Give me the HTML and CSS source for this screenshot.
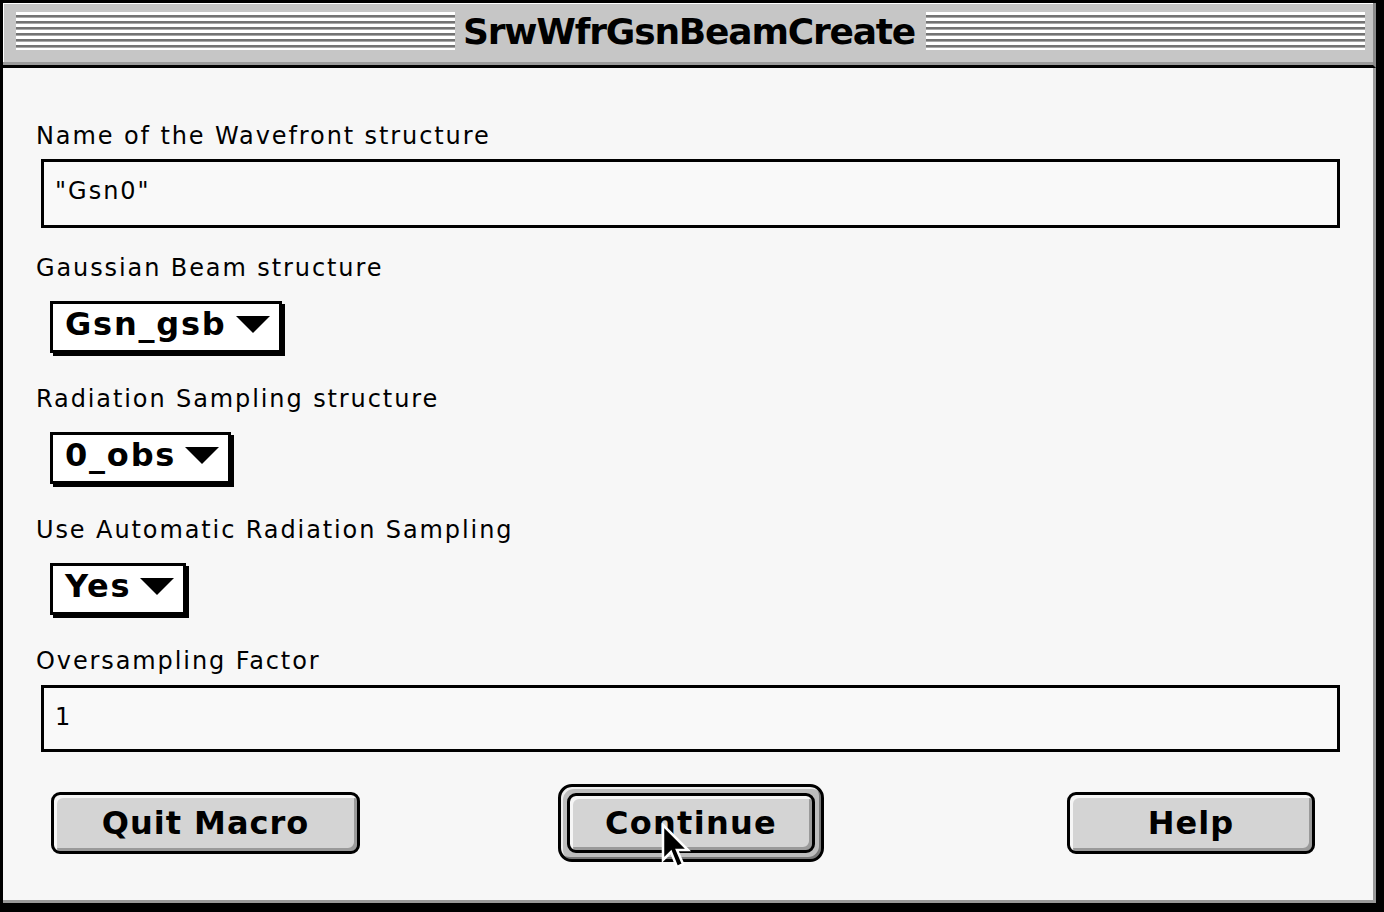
FILE: index.html
```html
<!DOCTYPE html>
<html>
<head>
<meta charset="utf-8">
<title>SrwWfrGsnBeamCreate</title>
<link rel="stylesheet" href="styles.css">
</head>
<body>
<div class="window">
  <div class="titlebar">
    <div class="stripes"></div>
    <div class="title">SrwWfrGsnBeamCreate</div>
    <div class="stripes"></div>
  </div>
  <div class="content">
    <div class="label">Name of the Wavefront structure</div>
    <div class="field field-first">"Gsn0"</div>
    <div class="label">Gaussian Beam structure</div>
    <div class="popup"><span class="popup-text">Gsn_gsb</span><svg class="tri" width="34" height="17" viewBox="0 0 34 17"><polygon points="0,0 34,0 17,17" fill="#000"/></svg></div>
    <div class="label">Radiation Sampling structure</div>
    <div class="popup"><span class="popup-text">0_obs</span><svg class="tri" width="34" height="17" viewBox="0 0 34 17"><polygon points="0,0 34,0 17,17" fill="#000"/></svg></div>
    <div class="label">Use Automatic Radiation Sampling</div>
    <div class="popup"><span class="popup-text">Yes</span><svg class="tri" width="34" height="17" viewBox="0 0 34 17"><polygon points="0,0 34,0 17,17" fill="#000"/></svg></div>
    <div class="label">Oversampling Factor</div>
    <div class="field field-last">1</div>
    <div class="buttons">
      <div class="btn btn-quit">Quit Macro</div>
      <div class="default-ring"><div class="btn btn-continue">Continue</div></div>
      <div class="btn btn-help">Help</div>
    </div>
    <svg class="cursor" width="30" height="48" viewBox="0 0 30 48"><path d="M2 2 L2 37 L10 29 L16 44 L22 41 L16 27 L27 27 Z" fill="#000" stroke="#fff" stroke-width="2.5" stroke-linejoin="miter"/></svg>
  </div>
</div>
</body>
</html>
```
FILE: styles.css
```css
html, body {
  margin: 0;
  padding: 0;
  background: #000;
}

.window {
  box-sizing: border-box;
  width: 1384px;
  height: 912px;
  border-top: 3px solid #000;
  border-left: 3px solid #000;
  border-right: 8px solid #000;
  border-bottom: 9px solid #000;
  display: flex;
  flex-direction: column;
  background: #f7f7f7;
  position: relative;
}

.titlebar {
  box-sizing: border-box;
  height: 65px;
  flex: none;
  background: #c6c6c6;
  border-bottom: 3px solid #000;
  border-right: 3px solid #8a8a8a;
  box-shadow: inset 0 -3px 0 #9a9a9a, inset 1px 1px 0 #fff;
  display: flex;
  align-items: flex-start;
  padding: 9px 8px 0 13px;
}

.stripes {
  flex: 1;
  height: 38px;
  background: repeating-linear-gradient(to bottom, #ffffff 0, #ffffff 3px, #737373 3px, #737373 5px, #a8a8a8 5px, #a8a8a8 6px);
}

.title {
  font-family: "DejaVu Sans", "Liberation Sans", sans-serif;
  font-weight: bold;
  font-size: 36px;
  letter-spacing: -1.2px;
  line-height: 40px;
  color: #000;
  padding: 0 11px 0 8px;
  white-space: nowrap;
}

.content {
  flex: 1;
  position: relative;
  background: #f7f7f7;
  border-right: 3px solid #999;
  border-bottom: 3px solid #999;
  padding: 55px 0 0 33px;
  font-family: "DejaVu Sans", "Liberation Sans", sans-serif;
  color: #000;
}

.label {
  font-size: 24px;
  letter-spacing: 1.9px;
  line-height: 26px;
  height: 26px;
  white-space: nowrap;
}

.field {
  box-sizing: border-box;
  width: 1299px;
  border: 3px solid #000;
  background: #f9f9f9;
  margin-left: 5px;
  padding-left: 11px;
  font-size: 24px;
  letter-spacing: 2px;
  line-height: 58px;
}

.field-first {
  height: 69px;
  margin-top: 10px;
  margin-bottom: 27px;
}

.field-last {
  height: 67px;
  margin-top: 11px;
}

.popup {
  box-sizing: border-box;
  height: 52px;
  width: fit-content;
  display: flex;
  align-items: flex-start;
  margin: 20px 0 33px 14px;
  border: 3px solid #000;
  background: #fff;
  box-shadow: 3px 3px 0 #000;
  padding: 0 9px 0 12px;
}

.popup-text {
  font-weight: bold;
  font-size: 32px;
  letter-spacing: 1.8px;
  line-height: 40px;
  white-space: nowrap;
}

.tri {
  display: block;
  margin-top: 12px;
  margin-left: 9px;
}

.buttons {
  display: flex;
  align-items: center;
  margin-top: 32px;
}

.btn {
  box-sizing: border-box;
  height: 62px;
  border: 3px solid #000;
  border-radius: 9px;
  background: #d4d4d4;
  box-shadow: inset 3px 3px 0 #f6f6f6, inset -3px -3px 0 #9a9a9a;
  display: flex;
  align-items: center;
  justify-content: center;
  font-weight: bold;
  font-size: 32px;
  letter-spacing: 1px;
  white-space: nowrap;
}

.btn-quit {
  width: 309px;
  margin-left: 15px;
}

.default-ring {
  margin-left: 198px;
  border: 3px solid #000;
  border-radius: 14px;
  padding: 6px;
  background: #bdbdbd;
  box-shadow: inset 2px 2px 0 #eeeeee, inset -2px -2px 0 #777;
}

.btn-continue {
  width: 248px;
  height: 60px;
  letter-spacing: 1.3px;
}

.btn-help {
  width: 248px;
  margin-left: 243px;
}

.cursor {
  position: absolute;
  left: 658px;
  top: 755px;
}
```
